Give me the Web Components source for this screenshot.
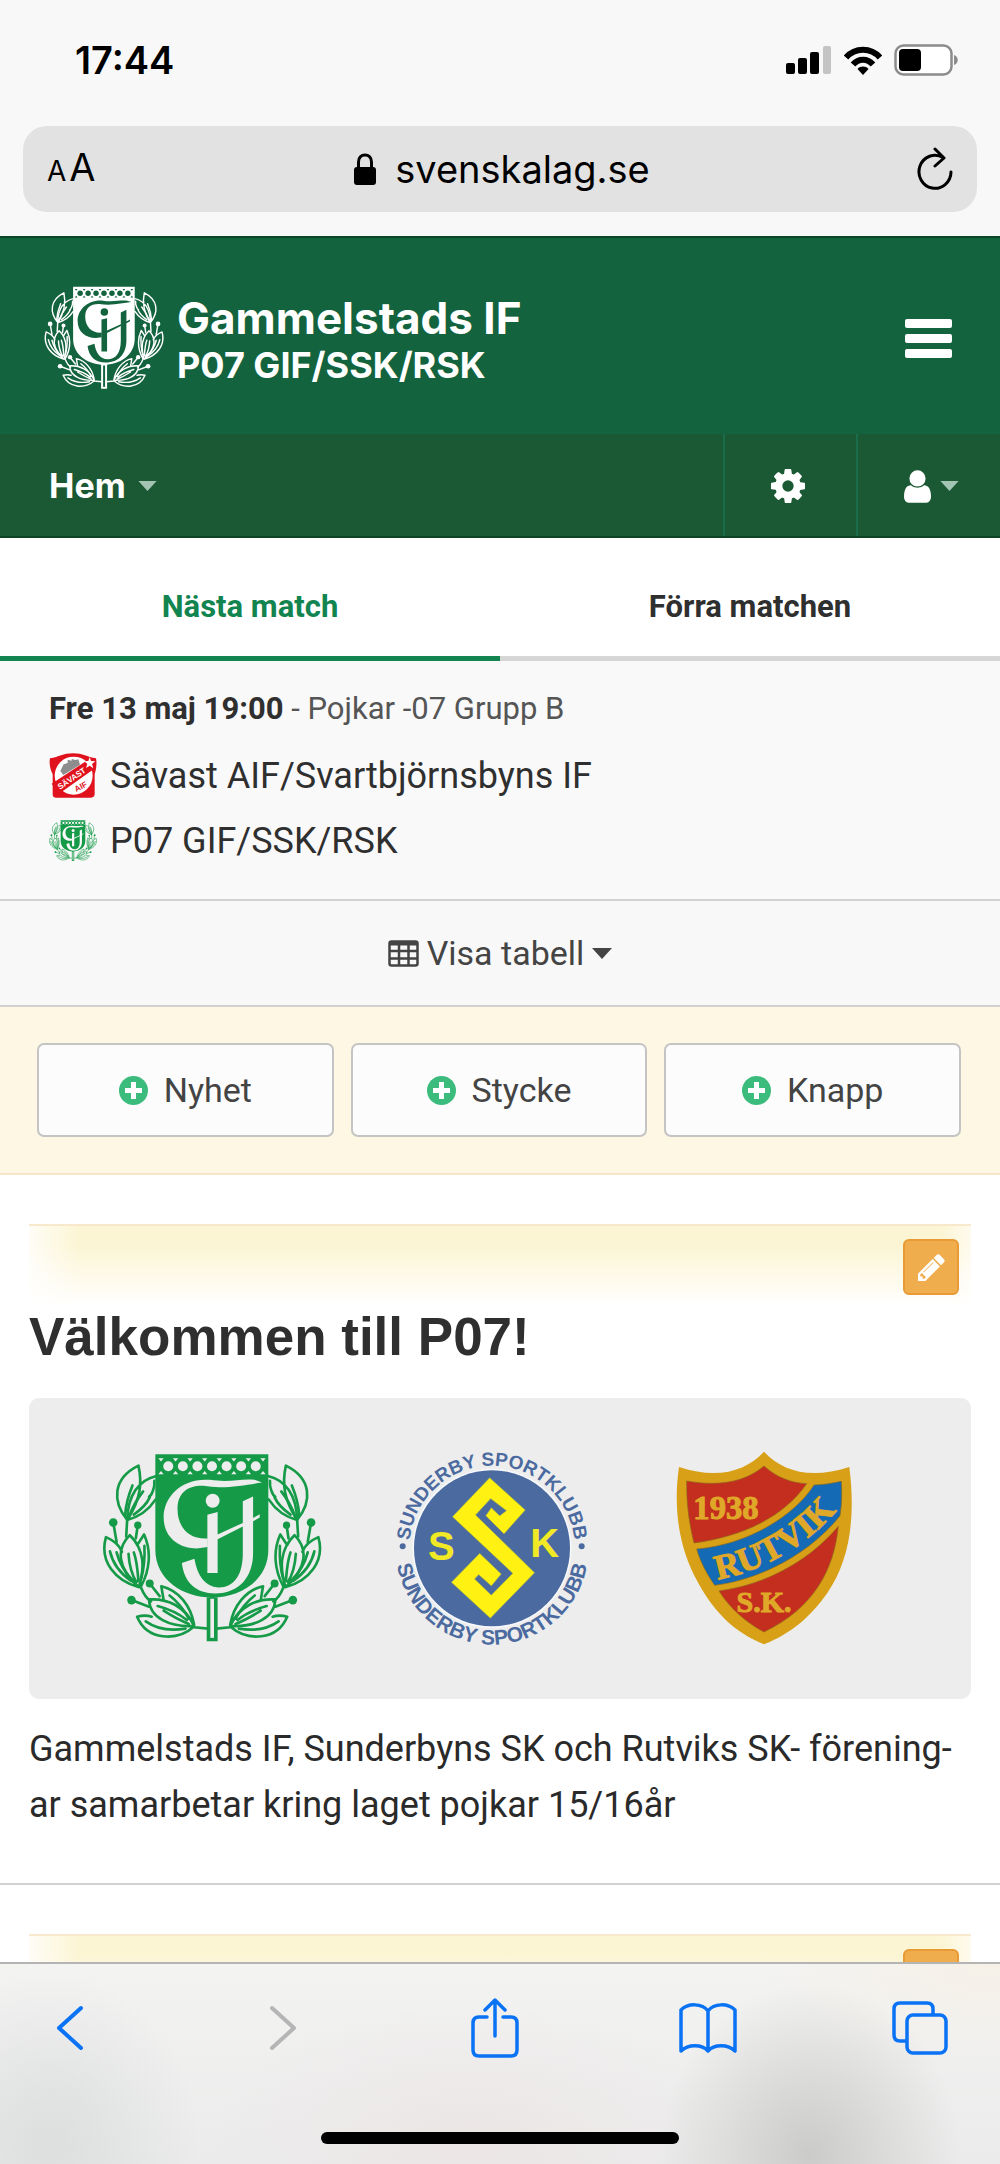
<!DOCTYPE html>
<html lang="sv">
<head>
<meta charset="utf-8">
<meta name="viewport" content="width=device-width, initial-scale=1">
<title>Gammelstads IF – P07 GIF/SSK/RSK</title>
<style>
  html, body { margin: 0; height: 100%; }
  body { font-family: Roboto, "Liberation Sans", sans-serif; color: #2f2f2f; background: #fff; }
</style>
</head>
<body>
<phone-shell>
  <status-bar slot="top" time="17:44"></status-bar>
  <address-bar slot="top">svenskalag.se</address-bar>

  <club-header>
    <span slot="club">Gammelstads IF</span>
    <span slot="team">P07 GIF/SSK/RSK</span>
  </club-header>
  <club-nav>Hem</club-nav>
  <match-tabs></match-tabs>
  <match-card>
    <b slot="when">Fre 13 maj 19:00</b>
    <span slot="group">- Pojkar -07 Grupp B</span>
    <team-row>
      <savast-crest slot="crest"></savast-crest>Sävast AIF/Svartbjörnsbyns IF
    </team-row>
    <team-row>
      <gif-crest slot="crest"></gif-crest>P07 GIF/SSK/RSK
    </team-row>
  </match-card>
  <table-toggle>Visa tabell</table-toggle>
  <admin-actions>
    <add-button>Nyhet</add-button>
    <add-button>Stycke</add-button>
    <add-button>Knapp</add-button>
  </admin-actions>
  <page-section>
    <span slot="title">Välkommen till P07!</span>
    <crest-banner>
      <gif-crest></gif-crest>
      <ssk-crest></ssk-crest>
      <rutvik-crest></rutvik-crest>
    </crest-banner>
    <section-text>Gammelstads IF, Sunderbyns SK och Rutviks SK- förening&shy;ar samarbetar kring laget pojkar 15/16år</section-text>
  </page-section>
  <page-section></page-section>

  <browser-toolbar slot="bottom"></browser-toolbar>
</phone-shell>

<script>
const reset = `
  :host, *, *::before, *::after { box-sizing: border-box; }
  button { font: inherit; color: inherit; background: none; border: 0; margin: 0; padding: 0; cursor: pointer; }
  svg { display: block; flex: none; }
  h1, h2, p { margin: 0; }
`;

function define(name, css, html) {
  const template = document.createElement('template');
  template.innerHTML = `<style>${reset}${css}</style>${html}`;
  customElements.define(name, class extends HTMLElement {
    constructor() {
      super();
      this.attachShadow({ mode: 'open' }).append(template.content.cloneNode(true));
    }
    connectedCallback() {
      for (const node of this.shadowRoot.querySelectorAll('[data-attr]')) {
        node.textContent = this.getAttribute(node.dataset.attr);
      }
    }
  });
}

/* ---------- shell ---------- */
define('phone-shell', `
  :host { display: flex; flex-direction: column; height: 100vh; }
  header { background: #f8f8f8; padding-bottom: 24px; }
  main { flex: 1; min-height: 0; overflow: hidden; }
`, `<header><slot name="top"></slot></header><main><slot></slot></main><slot name="bottom"></slot>`);

define('status-bar', `
  :host { display: flex; justify-content: space-between; align-items: center; height: 126px; padding: 0 41px 6px 75px;
          font: 600 38px/46px Inter, sans-serif; color: #000; }
  .icons { display: flex; align-items: center; gap: 12px; }
`, `
  <span data-attr="time"></span>
  <span class="icons">
    <svg width="46" height="28" viewBox="0 0 46 28" aria-hidden="true">
      <rect y="17" width="9" height="11" rx="2"/><rect x="12" y="12" width="9" height="16" rx="2"/>
      <rect x="24" y="6" width="9" height="22" rx="2"/><rect x="37" width="8" height="28" rx="2" fill="#c4c4c4"/>
    </svg>
    <svg width="38" height="29" viewBox="0 0 38 29" aria-hidden="true">
      <g fill="none" stroke="#000" stroke-width="6"><path d="M2 11.500C11 1 27 1 36 11.500"/><path d="M9 18.500C14.500 12 23.500 12 29 18.500"/></g>
      <path d="M13.500 23C16.500 19.800 21.500 19.800 24.500 23L19 29Z"/>
    </svg>
    <svg width="65" height="32" viewBox="0 0 65 32" aria-hidden="true">
      <rect x="1.500" y="1.500" width="56" height="29" rx="8" fill="#fff" stroke="#8c8c8c" stroke-width="2.500"/>
      <rect x="5" y="5" width="22" height="22" rx="4"/><path d="M60 11c5 1.500 5 8.500 0 10z" fill="#8c8c8c"/>
    </svg>
  </span>
`);

define('address-bar', `
  :host { display: flex; align-items: center; justify-content: space-between; height: 86px; margin: 0 23px; padding: 0 24px;
          border-radius: 24px; background: #e2e2e2; color: #000; font: 400 38px/46px Inter, sans-serif; }
  .aa { width: 64px; display: flex; align-items: baseline; gap: 3px; }
  .aa small { font-size: 28px; }
  .site { display: flex; align-items: center; gap: 19px; }
  .reload { width: 60px; display: flex; justify-content: flex-end; }
`, `
  <button class="aa" aria-label="Textstorlek"><small>A</small><span>A</span></button>
  <button class="site">
    <svg width="22" height="32" viewBox="0 0 22 32" aria-hidden="true"><rect y="14" width="22" height="18" rx="3"/><path d="M4.500 15V9C4.500-.5 17.500-.5 17.500 9v6" fill="none" stroke="#000" stroke-width="3"/></svg>
    <slot></slot>
  </button>
  <button class="reload" aria-label="Ladda om">
    <svg width="36" height="44" viewBox="0 0 36 44" fill="none" stroke="#000" stroke-width="3" stroke-linecap="round" stroke-linejoin="round"><path d="M34 25A16 16.500 0 1 1 26 10.500M18 2l9 9-9 8"/></svg>
  </button>
`);

/* ---------- crests ---------- */
const wreath = `
  <g fill="none" stroke="currentColor" stroke-width="8" stroke-linejoin="round" stroke-linecap="round">
    <path d="M140 300C95 245 95 175 174 136C186 190 180 240 140 300C142 225 175 180 226 168M140 300C180 290 210 262 226 238M222 182C224 202 214 226 206 230"/>
    <path d="M134 285C136 250 144 225 156 196M146 290C158 255 174 232 188 214M160 284C180 270 200 250 208 232"/>
    <path d="M140 300L137 350M98 308L108 366M172 316L166 356"/>
    <path d="M176 503C105 485 55 425 76 352C104 364 118 380 124 396M174 502C108 445 108 385 148 346C194 390 192 445 176 500M170 376L191 344C214 395 208 452 182 500"/>
    <path d="M88 395C96 430 120 462 152 484M108 398C116 430 134 460 160 486M144 402C146 435 154 465 168 488M160 398C170 425 172 460 174 484M192 378C194 420 190 450 182 478"/>
    <path d="M182 505C190 525 198 538 212 546M153 542L206 562M208 492L238 530"/>
    <path d="M342 622C290 668 200 664 170 592C186 588 200 588 214 592M342 620C268 624 208 596 206 540C262 536 316 562 342 620M250 542L243 500C296 512 332 560 342 616M342 624L384 628"/>
    <path d="M196 606C230 630 270 636 316 628M250 574C275 590 300 604 326 614M232 560C262 568 292 580 320 602M268 528C290 545 312 572 326 598"/>
  </g>
  <g fill="currentColor"><circle cx="98" cy="308" r="13"/><circle cx="172" cy="316" r="11"/><circle cx="153" cy="542" r="13"/><circle cx="208" cy="492" r="12"/></g>`;
const holes = Array.from({ length: 7 }, (_, i) => `<circle cx="${264 + i * 44}" cy="138" r="15"/>`).join('');
const wedges = Array.from({ length: 8 }, (_, i) => `<path d="M${234 + i * 44} 114h16l-8 10zM${234 + i * 44} 162h16l-8-10z"/>`).join('');
define('gif-crest', `
  :host { display: block; width: var(--crest-width, 220px); color: var(--crest-ink, #159a47); --ground: var(--crest-ground, #ededed); }
  svg { width: 100%; height: auto; }
  .knock { fill: var(--ground); }
`, `
  <svg viewBox="64 98 664 572" role="img" aria-label="Gammelstads IF">
    ${wreath}<g transform="matrix(-1 0 0 1 793 0)">${wreath}</g>
    <path d="M225 102H566V390C566 482 482 534 396 534C310 534 225 482 225 390ZM380 528h33v138h-33z" fill="currentColor"/>
    <g class="knock">
      ${holes}${wedges}
      <path d="M391 538h11v118h-11z"/>
      <path d="M547 187L525 179C480 175 450 188 390 179C305 172 250 230 250 292C250 352 295 386 350 386L383 382V356C330 360 292 325 292 268C292 220 320 196 370 197C430 208 500 194 547 187Z"/>
      <circle cx="398" cy="242" r="21"/>
      <path d="M382 284L413 276V344L489 309V244L520 229V294L540 283V293L520 304V400C520 470 480 522 405 522C350 522 312 490 305 430L343 417C352 470 375 500 415 504C460 505 489 470 489 400V320L413 358V460H382Z"/>
    </g>
  </svg>`);

define('ssk-crest', `
  :host { display: block; width: 196px; }
  svg { width: 100%; height: auto; overflow: visible; }
  text { font-family: "Liberation Sans", sans-serif; font-weight: 700; }
`, `
  <svg viewBox="68 90 588 588" role="img" aria-label="Sunderby Sportklubb">
    <circle cx="362" cy="385" r="239" fill="#f6f8fb"/><circle cx="362" cy="385" r="234" fill="#4b6a9f"/>
    <path id="over" d="M114 385A248 248 0 0 1 610 385" fill="none"/>
    <path id="under" d="M73 385A289 289 0 0 0 651 385" fill="none"/>
    <g fill="#4b6a9f" text-anchor="middle">
      <text font-size="57"><textPath href="#over" startOffset="50%">SUNDERBY SPORTKLUBB</textPath></text>
      <text font-size="63"><textPath href="#under" startOffset="50%">SUNDERBY SPORTKLUBB</textPath></text>
    </g>
    <circle cx="94" cy="379" r="9" fill="#4b6a9f"/><circle cx="631" cy="379" r="9" fill="#4b6a9f"/>
    <path fill="#fff212" stroke="#8a9a5a" stroke-width="2" d="M355 173L462 270L398 342L343 287L360 263L385 287L405 272L358 236L313 285L490 458L357 595L240 487L325 400L390 462L360 498L322 464L310 477L360 525L424 460L243 290Z"/>
    <g fill="#f2e926" font-size="120" text-anchor="middle"><text x="210" y="419">S</text><text x="520" y="412">K</text></g>
  </svg>`);

define('rutvik-crest', `
  :host { display: block; width: 176px; }
  svg { width: 100%; height: auto; }
  text { font-family: "Liberation Serif", serif; font-weight: 700; fill: #e0a828; stroke: #e0a828; stroke-width: 3px; }
`, `
  <svg viewBox="76 94 528 582" role="img" aria-label="Rutviks SK">
    <path fill="#d8a016" d="M340 96C395 155 480 180 596 142C616 300 595 425 530 520C480 590 425 640 340 674C255 640 190 580 140 485C82 380 68 260 85 142C200 180 285 155 340 96Z"/>
    <g stroke="#8c6a20" stroke-width="2">
      <path fill="#c42e1f" d="M340 139C380 175 425 190 468 192C400 290 280 350 130 370C115 310 107 250 108 184C200 200 280 190 340 139Z"/>
      <path fill="#146ab4" d="M490 196C520 195 545 191 572 185C574 220 574 250 568 288C480 400 330 480 192 497C170 465 150 430 138 388C290 375 430 290 490 196Z"/>
      <path fill="#c42e1f" d="M563 320C550 450 490 565 340 637C290 610 240 570 205 514C340 495 470 430 563 320Z"/>
    </g>
    <path id="sash" d="M182 482C330 460 470 380 570 258" fill="none"/>
    <text x="226" y="297" font-size="98" text-anchor="middle">1938</text>
    <text font-size="105" text-anchor="middle"><textPath href="#sash" startOffset="50%">RUTVIK</textPath></text>
    <text x="340" y="578" font-size="90" text-anchor="middle">S.K.</text>
  </svg>`);

define('savast-crest', `
  :host { display: block; width: 48px; }
  svg { width: 100%; height: auto; }
  text { font-family: "Liberation Sans", sans-serif; font-weight: 700; }
`, `
  <svg viewBox="54 36 144 135" role="img" aria-label="Sävast AIF">
    <path fill="#e0121d" d="M57 52C85 48 95 37 126 37C157 37 167 48 195 52C198 65 196 85 191 100V160Q190 170 180 170H74Q65 170 65 160V100C57 85 54 65 57 52Z"/>
    <circle cx="128" cy="104" r="57" fill="#fff"/>
    <path fill="#8d8d8d" d="M88 90l10-20 12-4v-10l12 3v-5l12 3 8-2 5 16-50 31z"/>
    <path fill="#e0121d" d="M62 128L178 52L192 82L84 158Z"/>
    <path fill="#fff" d="M176 48l4 12 13 1-10 8 4 13-11-8-11 7 4-12-9-8 12-1z"/>
    <text transform="translate(87 146) rotate(-34)" font-size="24" fill="#fff">SÄVAST</text>
    <text transform="translate(136 153) rotate(-28)" font-size="24" fill="#e0121d">AIF</text>
  </svg>`);

/* ---------- club header ---------- */
define('club-header', `
  :host { display: flex; align-items: center; height: 198px; padding: 4px 48px 0 44px; gap: 13px; color: #fff; background: #13633e; border-top: 2px solid #0a4628;
          font-family: Inter, sans-serif; font-weight: 700; }
  gif-crest { --crest-width: 120px; --crest-ink: #fff; --crest-ground: #13633e; }
  .names { flex: 1; padding-top: 4px; }
  h1 { font-size: 44px; line-height: 50px; }
  p { font-size: 36px; line-height: 44px; }
`, `
  <gif-crest></gif-crest>
  <div class="names"><h1><slot name="club"></slot></h1><p><slot name="team"></slot></p></div>
  <button aria-label="Meny">
    <svg width="47" height="39" viewBox="0 0 47 39" fill="#fff"><rect width="47" height="9" rx="2"/><rect y="15" width="47" height="9" rx="2"/><rect y="30" width="47" height="9" rx="2"/></svg>
  </button>`);

const caret = (w, h, fill) => `<svg width="${w}" height="${h}" viewBox="0 0 20 11" aria-hidden="true"><path d="M0 0h20L10 11z" fill="${fill}"/></svg>`;
define('club-nav', `
  :host { display: flex; height: 104px; background: #1b5834; color: #fff; border-bottom: 2px solid #0d4424; font: 700 34px/44px Inter, sans-serif; }
  button { display: flex; align-items: center; justify-content: center; gap: 9px; padding-top: 2px; }
  .home { margin-right: auto; padding-left: 49px; gap: 12px; }
  .tool { border-left: 2px solid #1a6c4a; width: 133px; padding-right: 6px; }
  .user { width: 144px; padding: 2px 0 0 4px; }
`, `
  <button class="home"><slot></slot>${caret(19, 10, '#a3c4b3')}</button>
  <button class="tool" aria-label="Inställningar"><svg width="34" height="34" viewBox="128 128 1536 1536" fill="#fff"><path d="M1152 896q0-106-75-181t-181-75-181 75-75 181 75 181 181 75 181-75 75-181zm512-109v222q0 12-8 23t-20 13l-185 28q-19 54-39 91 35 50 107 138 10 12 10 25t-9 23q-27 37-99 108t-94 71q-12 0-26-9l-138-108q-44 23-91 38-16 136-29 186-7 28-36 28h-222q-14 0-24.500-8.500t-11.500-21.500l-28-184q-49-16-90-37l-141 107q-10 9-25 9-14 0-25-11-126-114-165-168-7-10-7-23 0-12 8-23 15-21 51-66.500t54-70.500q-27-50-41-99l-183-27q-13-2-21-12.500t-8-23.500v-222q0-12 8-23t19-13l186-28q14-46 39-92-40-57-107-138-10-12-10-24 0-10 9-23 26-36 98.500-107.500t94.500-71.500q13 0 26 10l138 107q44-23 91-38 16-136 29-186 7-28 36-28h222q14 0 24.500 8.500t11.500 21.500l28 184q49 16 90 37l142-107q9-9 24-9 13 0 25 10 129 119 165 170 7 8 7 22 0 12-8 23-15 21-51 66.500t-54 70.500q26 50 41 98l183 28q13 2 21 12.500t8 23.500z"/></svg></button>
  <button class="tool user" aria-label="Konto"><svg width="27" height="33" viewBox="256 128 1280 1536" fill="#fff"><path d="M1536 1399q0 109-62.500 187t-150.500 78h-854q-88 0-150.500-78t-62.500-187q0-85 8.500-160.500t31.500-152 58.500-131 94-89 134.500-34.500q131 128 313 128t313-128q76 0 134.500 34.500t94 89 58.500 131 31.500 152 8.500 160.500zm-256-887q0 159-112.500 271.500t-271.500 112.500-271.500-112.500-112.500-271.500 112.500-271.500 271.500-112.500 271.500 112.500 112.500 271.500z"/></svg>${caret(19, 10, '#a3c4b3')}</button>`);

/* ---------- match widget ---------- */
define('match-tabs', `
  :host { display: flex; }
  [role=tablist] { display: flex; flex: 1; }
  button { flex: 1; height: 123px; padding-top: 20px; border-bottom: 5px solid #d6d6d6; font-weight: 700; font-size: 31px; line-height: 36px; }
  [aria-selected=true] { color: #12844f; border-color: #12844f; }
`, `<div role="tablist"><button role="tab" aria-selected="true">Nästa match</button><button role="tab" aria-selected="false">Förra matchen</button></div>`);

define('match-card', `
  :host { display: flex; flex-direction: column; padding: 26px 49px; background: #f9f9f9; border-bottom: 2px solid #d2d2d2; }
  p { font-size: 31px; line-height: 44px; color: #555; padding-bottom: 12px; }
  ::slotted(b) { color: #2f2f2f; }
`, `<p><slot name="when"></slot> <slot name="group"></slot></p><slot></slot>`);

define('team-row', `
  :host { display: flex; align-items: center; gap: 13px; height: 65px; font-size: 36px; line-height: 42px; --crest-width: 48px; --crest-ground: #f9f9f9; }
`, `<slot name="crest"></slot><span><slot></slot></span>`);

define('table-toggle', `
  :host { display: flex; background: #f9f8f9; border-bottom: 2px solid #d0d0d0; font-size: 34px; line-height: 40px; color: #444; }
  button { flex: 1; display: flex; align-items: center; justify-content: center; height: 104px; gap: 8px; }
`, `
  <button><svg width="31" height="27" viewBox="0 0 31 27" fill="none" stroke="#444" stroke-width="2.500" aria-hidden="true"><rect x="1.500" y="1.500" width="28" height="24" rx="2"/><path d="M1 3.500h29" stroke-width="4"/><path d="M1 11h29M1 18.500h29M11 3v22M20.500 3v22"/></svg>
  <slot></slot>${caret(20, 11, '#444')}</button>`);

define('admin-actions', `
  :host { display: flex; gap: 17px; padding: 36px 39px 36px 37px; background: #fdf7e3; border-bottom: 2px solid #f8e5c8; }
  ::slotted(*) { flex: 1; }
`, `<slot></slot>`);

define('add-button', `
  :host { display: flex; font-size: 34px; line-height: 40px; color: #444; }
  button { flex: 1; display: flex; align-items: center; justify-content: center; gap: 16px; height: 94px; background: #fcfcfc; border: 2px solid #c4c4c4; border-radius: 7px; }
`, `<button><svg width="29" height="29" viewBox="0 0 29 29" aria-hidden="true"><circle cx="14.500" cy="14.500" r="14.500" fill="#3cbc7c"/><path d="M14.500 6v17M6 14.500h17" stroke="#fff" stroke-width="5"/></svg><span><slot></slot></span></button>`);

/* ---------- editable sections ---------- */
define('page-section', `
  :host { display: block; padding: 49px 29px 50px; border-bottom: 2px solid #d2d2d2; }
  .edit { display: flex; justify-content: flex-end; align-items: flex-start; height: 82px; padding: 13px 12px 0; border-top: 2px solid #f8e8cc;
          background: linear-gradient(90deg, #fffc 0, #fff0 50px, #fff0 calc(100% - 30px), #fff9 100%) padding-box, linear-gradient(#fcf5d4 25%, #fff) padding-box; }
  .edit button { display: flex; align-items: center; justify-content: center; width: 56px; height: 56px; background: #f0ad4e; border: 2px solid #e89a34; border-radius: 6px; }
  h2 { font: 700 53px/62px "Liberation Sans", Arial, sans-serif; color: #2f2f2f; }
`, `
  <div class="edit"><button aria-label="Redigera"><svg width="27" height="27" viewBox="128 128 1536 1536" fill="#fff"><path d="M491 1536l91-91-235-235-91 91v107h128v128h107zm523-928q0-22-22-22-10 0-17 7l-542 542q-7 7-7 17 0 22 22 22 10 0 17-7l542-542q7-7 7-17zm-54-192l416 416-832 832h-416v-416zm683 96q0 53-37 90l-166 166-416-416 166-165q36-38 90-38 53 0 91 38l235 234q37 39 37 91z"/></svg></button></div>
  <h2><slot name="title"></slot></h2><slot></slot>`);

define('crest-banner', `
  :host { display: flex; align-items: center; gap: 72px; height: 301px; margin-top: 30px; padding: 0 73px 2px; background: #ededed; border-radius: 10px; }
  ::slotted(rutvik-crest) { margin-left: 14px; }
`, `<slot></slot>`);

define('section-text', `
  :host { display: block; margin-top: 22px; font-size: 36px; line-height: 56px; color: #2a2a2a; }
`, `<p><slot></slot></p>`);

/* ---------- bottom toolbar ---------- */
define('browser-toolbar', `
  :host { display: flex; flex-direction: column; align-items: center; justify-content: space-between; height: 202px; padding: 34px 0 20px; border-top: 2px solid #b4b4b4;
          background: radial-gradient(ellipse 150px 170px at 81% 95%, #cbcbc9 0, #cbcbc900 100%), radial-gradient(ellipse 150px 170px at 5% 90%, #dcdfde 0, #dcdfde00 100%),
            radial-gradient(ellipse 260px 140px at 47% 90%, #ece6e6 0, #ece6e600 100%), radial-gradient(ellipse 240px 100px at 100% 0, #f6f1e8 0, #f6f1e800 100%), linear-gradient(#f3f3f2, #ebebeb); }
  nav { align-self: stretch; display: flex; align-items: center; justify-content: space-between; padding: 0 51px 0 41px; }
  button { width: 58px; display: flex; justify-content: center; }
  .home { width: 358px; height: 12px; border-radius: 6px; background: #000; }
`, `
  <nav>
    <button aria-label="Bakåt"><svg width="28" height="46" viewBox="0 0 28 46" fill="none" stroke="#0a72f5" stroke-width="4" stroke-linecap="round" stroke-linejoin="round"><path d="M25 3L3 23l22 20"/></svg></button>
    <button aria-label="Framåt" disabled><svg width="28" height="46" viewBox="0 0 28 46" fill="none" stroke="#b5b5b5" stroke-width="4" stroke-linecap="round" stroke-linejoin="round"><path d="M3 3l22 20L3 43"/></svg></button>
    <button aria-label="Dela"><svg width="48" height="60" viewBox="0 0 48 60" fill="none" stroke="#0a72f5" stroke-width="3.500" stroke-linecap="round" stroke-linejoin="round"><path d="M16 19H8q-6 0-6 6v27q0 6 6 6h32q6 0 6-6V25q0-6-6-6h-8M24 38V3M14 12L24 2l10 10"/></svg></button>
    <button aria-label="Bokmärken"><svg width="58" height="50" viewBox="0 0 58 50" fill="none" stroke="#0a72f5" stroke-width="3.500" stroke-linejoin="round"><path d="M29 8C23 0 9 0 2 7V48C9 41 23 41 29 48C35 41 49 41 56 48V7C49 0 35 0 29 8V47"/></svg></button>
    <button aria-label="Flikar"><svg width="56" height="54" viewBox="0 0 56 54" fill="none" stroke="#0a72f5" stroke-width="3.500"><rect x="15" y="14" width="39" height="38" rx="6"/><path d="M15 40H8q-6 0-6-6V8q0-6 6-6h27q6 0 6 6v6"/></svg></button>
  </nav>
  <div class="home"></div>`);
</script>
</body>
</html>
